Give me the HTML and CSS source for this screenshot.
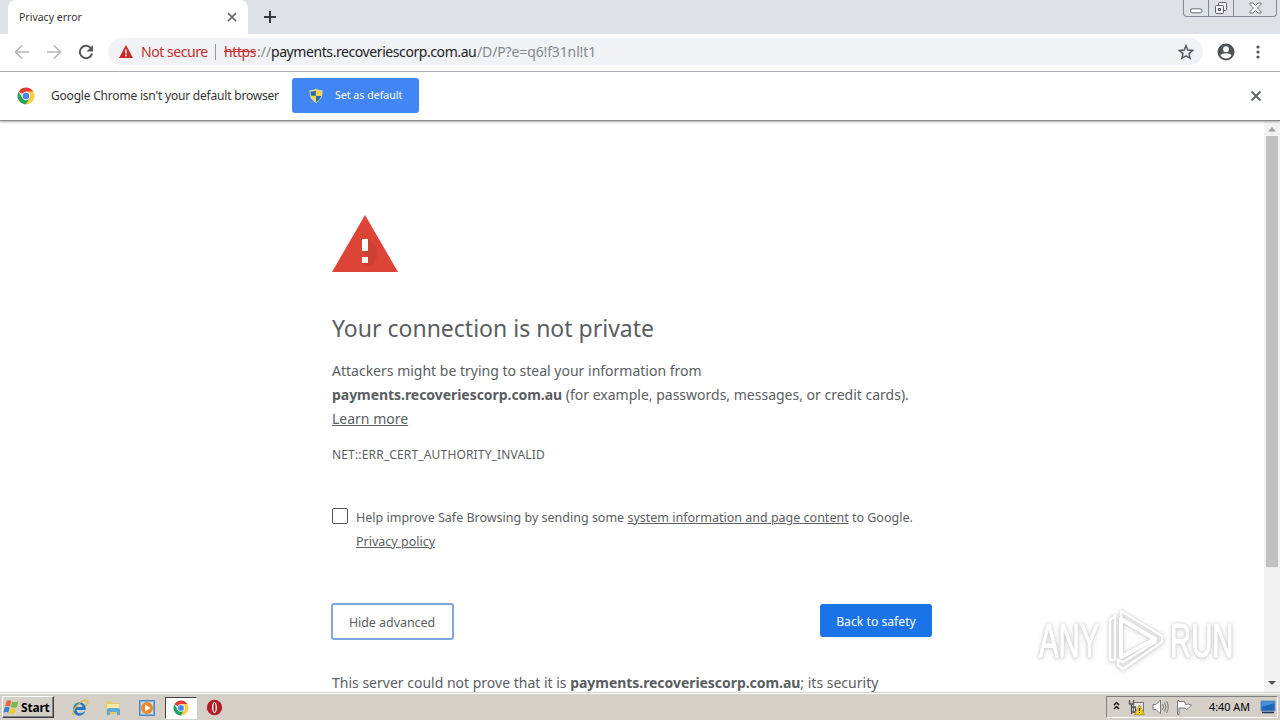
FILE: index.html
```html
<!DOCTYPE html>
<html lang="en">

<head>
  <meta charset="UTF-8" />
  <meta name="viewport" content="width=device-width, initial-scale=1" />
  <title>Privacy error</title>
  <link rel="stylesheet" href="styles.css">
</head>

<body>
  <svg class="defs" width="0" height="0">
    <symbol id="chrome" viewBox="0 0 18 18">
      <circle cx="9" cy="9" r="8.5" fill="#fff" />
      <path d="M9 9 1.6 4.8A8.5 8.5 0 0 1 16.4 4.8H9z" fill="#df3f32" />
      <path d="M16.4 4.8A8.5 8.5 0 0 1 9 17.5L12.7 11 9 4.8z" fill="#fdd03b" />
      <path d="M1.6 4.8A8.5 8.5 0 0 0 9 17.5L12.7 11 5.3 11z" fill="#28a055" />
      <circle cx="9" cy="9" r="4.2" fill="#fff" />
      <circle cx="9" cy="9" r="3.3" fill="#4a87e8" />
    </symbol>
  </svg>

  <header class="tabstrip">
    <div class="tab">
      <span class="tab-title">Privacy error</span>
      <svg width="10" height="10" viewBox="0 0 10 10"><path d="M1 1l8 8M9 1L1 9" stroke="#5f6368" stroke-width="1.7" /></svg>
    </div>
    <svg class="new-tab" width="12" height="12" viewBox="0 0 12 12"><path d="M6 0v12M0 6h12" stroke="#34373d" stroke-width="2" /></svg>
    <div class="window-buttons">
      <span class="wbtn"><svg width="13" height="6" viewBox="0 0 13 6"><rect x=".5" y=".8" width="11.5" height="4" rx="1.5" fill="#fff" stroke="#666b75" /></svg></span>
      <span class="wbtn"><svg width="14" height="14" viewBox="0 0 14 14"><g fill="#f3f5f8" stroke="#5c616b"><rect x="4.500" y="1.500" width="8" height="8" rx="1" /><rect x="1.500" y="4.500" width="8" height="8" rx="1" /><rect x="4.500" y="7.500" width="2" height="2" /></g></svg></span>
      <span class="wbtn wide"><svg width="13" height="12" viewBox="0 0 13 12"><path d="M1 1h3l2.500 2.500L9 1h3v1.500L8.500 6 12 9.500V11H9L6.500 8.500 4 11H1V9.500L4.500 6 1 2.500z" fill="#fff" stroke="#666b75" /></svg></span>
    </div>
  </header>

  <nav class="toolbar">
    <svg width="16" height="16" viewBox="0 0 16 16"><path d="M15 8H2M8 1.500L1.500 8 8 14.500" fill="none" stroke="#b5b7ba" stroke-width="1.700" /></svg>
    <svg width="16" height="16" viewBox="0 0 16 16"><path d="M1 8h13M8 1.500L14.500 8 8 14.500" fill="none" stroke="#b5b7ba" stroke-width="1.700" /></svg>
    <svg width="16" height="16" viewBox="0 0 16 16"><path d="M13.200 4.500A6.200 6.200 0 1 0 14.100 9.500" fill="none" stroke="#54585d" stroke-width="2" /><path d="M15 1v6.500H8.500z" fill="#54585d" /></svg>
    <div class="omnibox">
      <svg width="14" height="13" viewBox="0 0 14 13"><path d="M7 0l7 13H0z" fill="#cd2a27" /><path d="M7 4.500v4M7 9.500v1.800" stroke="#fff" stroke-width="1.500" /></svg>
      <span class="not-secure">Not secure</span>
      <span class="divider"></span>
      <span class="url"><span class="scheme">https</span><span class="grey slashes">://</span><span class="host">payments.recoveriescorp.com.au</span><span class="grey path">/D/P?e=q6!f31nl!t1</span></span>
      <svg class="star" width="16" height="16" viewBox="0 0 16 16"><path d="M8 1.700l1.800 4.400 4.800.4-3.600 3.100 1.100 4.700L8 11.800l-4.100 2.500L5 9.600 1.400 6.500l4.800-.4z" fill="none" stroke="#54585d" stroke-width="1.500" /></svg>
    </div>
    <svg class="avatar" width="18" height="18" viewBox="0 0 18 18"><circle cx="9" cy="9" r="8.500" fill="#505459" /><circle cx="9" cy="6.200" r="2.900" fill="#fff" /><path d="M3.500 12.500c1-3 10-3 11 0-2.500 4-8.500 4-11 0z" fill="#fff" /></svg>
    <svg width="4" height="14" viewBox="0 0 4 14"><g fill="#505459"><circle cx="2" cy="2" r="1.600" /><circle cx="2" cy="7" r="1.600" /><circle cx="2" cy="12" r="1.600" /></g></svg>
  </nav>

  <div class="infobar">
    <svg width="18" height="18"><use href="#chrome" /></svg>
    <span class="info-text">Google Chrome isn't your default browser</span>
    <button class="default-btn">
      <svg width="14" height="16" viewBox="0 0 14 16"><path d="M7 1c2 1.500 4 1.500 6 1.500 0 6-1 9-6 12-5-3-6-6-6-12C3 2.500 5 2.500 7 1z" fill="#f3d24c" stroke="#ddd9b8" /><path d="M6.800 2.500v5.300H2c-.3-1.500-.4-3-.4-4.300C3.700 3.400 5.300 3.400 6.800 2.500zM7 8h5c-.6 3-2 4.300-5 6z" fill="#246eac" /></svg>
      <span>Set as default</span>
    </button>
    <svg class="info-close" width="12" height="12" viewBox="0 0 12 12"><path d="M1.500 1.500l9 9M10.500 1.500l-9 9" stroke="#5f6368" stroke-width="1.900" /></svg>
  </div>

  <div class="viewport">
    <main class="interstitial">
      <svg class="warning" width="66" height="57" viewBox="0 0 66 57"><path d="M33 0l33 57H0z" fill="#db4437" /><path d="M36 23l8 9 1 10-4 8-5 1-6-3 6-6-6-6z" fill="#b83a2e" opacity=".35" /><path d="M30 24h6v12h-6zM30 42h6v6h-6z" fill="#fff" /></svg>
      <h1>Your connection is not private</h1>
      <p class="lead">Attackers might be trying to steal your information from<br><strong>payments.recoveriescorp.com.au</strong> (for example, passwords, messages, or credit cards).<br><a>Learn more</a></p>
      <div class="error-code">NET::ERR_CERT_AUTHORITY_INVALID</div>
      <div class="opt-in">
        <span class="checkbox"></span>
        <p>Help improve Safe Browsing by sending some <a>system information and page content</a> to Google.<br><a>Privacy policy</a></p>
      </div>
      <div class="actions">
        <button class="btn outline">Hide advanced</button>
        <button class="btn primary">Back to safety</button>
      </div>
      <p class="details">This server could not prove that it is <strong>payments.recoveriescorp.com.au</strong>; its security</p>
    </main>
    <div class="scrollbar">
      <svg width="16" height="14" viewBox="0 0 16 14"><path d="M4 9.500l4-4.500 4 4.500z" fill="#a3a3a3" /></svg>
      <span class="thumb"></span>
      <svg class="down" width="16" height="18" viewBox="0 0 16 18"><path d="M4 7l4 4 4-4z" fill="#505050" /></svg>
    </div>
    <div class="watermark">
      <span class="any">ANY</span>
      <svg width="62" height="66" viewBox="0 0 62 66"><g fill="none" stroke="#fff" stroke-width="4" stroke-linejoin="round"><path d="M15 11v38L49 31z" /><path d="M15 11V3l41 25v6L17 61l-5-4v-5l5 2 34-21M9 52H4V12l5-4v44" stroke-width="2.500" /></g></svg>
      <span class="run">RUN</span>
    </div>
  </div>

  <footer class="taskbar">
    <div class="start">
      <svg width="17" height="16" viewBox="0 0 17 16"><path d="M3.500 2C5.500.7 7 1 8.300 2L7 7.500c-1.500-1-3-1-5 0z" fill="#e9683b" /><path d="M9.300 2.500c2 1 4 1 6 0L13.800 8c-2 1-4 1-5.800 0z" fill="#76b94a" /><path d="M1.700 8.500c2-1 3.500-1 5 0L5.300 13.800c-1.500-1-3-1-5 0z" fill="#3e83c8" /><path d="M7.700 9c2 1 4 1 6 0l-1.500 5.300c-2 1-4 1-5.800 0z" fill="#f2c83e" /></svg>
      <span>Start</span>
    </div>
    <div class="launch">
      <svg width="18" height="18" viewBox="0 0 18 18"><path d="M14.700 11H5.500c.5 4 5 4 7.800 1.600h1C11 19.500 1.800 17 2.200 9.700 3 1 15.500 1 14.700 11zM5.800 8h5.600C11 4.300 6.500 4.700 5.800 8z" fill="#2478cc" /><path d="M3.500 15.500C-3 16 10-1 16 1.500c2 1 0 4-1.500 6" fill="none" stroke="#e0b82f" stroke-width="1.300" /></svg>
      <svg width="18" height="18" viewBox="0 0 18 18"><path d="M1 2h5l1 2h7v11H1z" fill="#e5ca69" /><path d="M2 5h12v8H2z" fill="#f6e9a4" /><path d="M2 16v-5q0-2 2-2h9q2 0 2 2v5h-3v-3H5v3z" fill="#5fa9d6" /></svg>
      <svg width="18" height="18" viewBox="0 0 18 18"><rect x="1.500" y="1.500" width="15" height="15" fill="#79b5e4" stroke="#5584b7" /><rect x="3" y="3" width="12" height="12" fill="#c4dff2" /><circle cx="9" cy="9" r="6" fill="#ee8625" /><path d="M7 5.500v7L12.500 9z" fill="#fff" /></svg>
      <span class="active-app"><svg width="16" height="16"><use href="#chrome" /></svg></span>
      <svg width="18" height="18" viewBox="0 0 18 18"><circle cx="8.500" cy="8.500" r="7.700" fill="#b31d24" /><ellipse cx="8.500" cy="8.500" rx="2.400" ry="5.500" fill="#fff" /><ellipse cx="8.500" cy="8.500" rx="1" ry="4.600" fill="#981219" /></svg>
    </div>
    <div class="tray">
      <svg class="chev" width="7" height="9" viewBox="0 0 7 9"><path d="M1 4l2.500-2.500L6 4M1 8l2.500-2.500L6 8" fill="none" stroke="#000" stroke-width="1.400" /></svg>
      <svg width="17" height="16" viewBox="0 0 17 16"><rect x="5.500" y="3.500" width="10" height="10" fill="#e4e6e6" stroke="#777" /><path d="M1.500 1v4h4V1M3.500 5v10M3.500 8h4v5h-4" fill="none" stroke="#555" stroke-width="1.300" /><path d="M11.500 6l5 9.500h-10z" fill="#f5cf20" stroke="#b79b20" /><path d="M11.500 9v3M11.500 13v1" stroke="#222" /></svg>
      <svg width="17" height="16" viewBox="0 0 17 16"><path d="M1 5.500h3L8.500 1v14L4 10.500H1z" fill="#fff" stroke="#777" /><path d="M10.500 5q2 3 0 6M12.500 3.500q3 4.500 0 9M14.500 2q3.500 6 0 12" fill="none" stroke="#777" /></svg>
      <svg width="17" height="16" viewBox="0 0 17 16"><path d="M1.500 1.500v14h1.500V9h6l1 1.500q2 0 5.500-4.500-3-1.500-6-.5L8.500 2.500H3v-1z" fill="#fff" stroke="#777" /></svg>
      <span class="clock">4:40 AM</span>
      <svg class="desktop" width="16" height="14" viewBox="0 0 16 14"><path d="M1 1h14v10H1z" fill="#1c65b9" stroke="#7095bb" /><path d="M1.500 7L15 3V1.500H1.500z" fill="#4392db" /><path d="M2 12.500h12" stroke="#235" stroke-width="1.500" /></svg>
    </div>
  </footer>
</body>

</html>
```
FILE: styles.css
```css
* {
  box-sizing: border-box;
}

body {
  margin: 0;
  width: 1280px;
  height: 720px;
  display: flex;
  flex-direction: column;
  overflow: hidden;
  background: #fff;
  font-family: "Noto Sans", "Open Sans", sans-serif;
  white-space: nowrap;
}

.defs {
  position: absolute;
}

svg {
  flex: none;
}

button {
  font-family: inherit;
  padding: 0;
}

h1,
p {
  margin: 0;
}

.tabstrip {
  height: 34px;
  flex: none;
  display: flex;
  background: #dee1e6;
}

.tab {
  width: 240px;
  margin-left: 8px;
  padding: 0 11px;
  display: flex;
  align-items: center;
  justify-content: space-between;
  background: #fff;
  border-radius: 8px 8px 0 0;
}

.tab-title {
  font-size: 10.5px;
  color: #333;
}

.new-tab {
  margin: 11px 0 0 16px;
}

.window-buttons {
  height: 17px;
  margin: 0 3px 0 auto;
  display: flex;
  border: 1px solid #858993;
  border-top: none;
  border-radius: 0 0 4px 4px;
}

.wbtn {
  width: 25px;
  display: flex;
  align-items: center;
  justify-content: center;
  border-right: 1px solid #858993;
}

.wbtn:first-child {
  padding-top: 5px;
}

.wbtn.wide {
  width: 42px;
  border: none;
}

.toolbar {
  height: 38px;
  flex: none;
  padding: 0 0 2px 14px;
  display: flex;
  align-items: center;
  gap: 16px;
  border-bottom: 1px solid #acaeb1;
}

.omnibox {
  width: 1095px;
  height: 27px;
  margin-left: -2px;
  padding: 0 9px 0 11px;
  display: flex;
  align-items: center;
  border-radius: 14px;
  background: #f0f2f5;
  font-size: 14px;
}

.not-secure {
  margin-left: 8px;
  width: 67px;
  color: #c52f2b;
  letter-spacing: -.45px;
}

.divider {
  width: 1px;
  height: 16px;
  margin: 0 8px 0 7px;
  background: #999;
}

.url {
  display: flex;
}

.scheme {
  width: 33px;
  color: #c52f2b;
  text-decoration: line-through;
  letter-spacing: -.4px;
}

.slashes {
  width: 14px;
}

.host {
  width: 206px;
  color: #202124;
  letter-spacing: -.42px;
}

.grey {
  color: #85888c;
}

.path {
  letter-spacing: -.13px;
}

.star {
  margin-left: auto;
}

.avatar {
  margin: 0 5px 0 -2px;
}

.infobar {
  height: 49px;
  flex: none;
  padding: 0 18px 1px 17px;
  display: flex;
  align-items: center;
  border-bottom: 1px solid #898989;
  z-index: 1;
  box-shadow: 0 1px 2px #aaa;
}

.info-text {
  width: 228px;
  margin: 0 13px 0 16px;
  font-size: 12px;
  letter-spacing: -.2px;
  color: #333;
}

.default-btn {
  width: 127px;
  height: 35px;
  padding: 0 0 0 17px;
  display: flex;
  align-items: center;
  gap: 12px;
  border: none;
  border-radius: 3px;
  background: #4285f4;
  color: #fff;
  font-size: 10.6px;
}

.default-btn span {
  padding-bottom: 1px;
}

.info-close {
  margin-left: auto;
}

.viewport {
  flex: 1;
  min-height: 0;
  position: relative;
  display: flex;
  overflow: hidden;
}

.interstitial {
  width: 600px;
  margin-left: 332px;
  padding-top: 94px;
  color: #5a5d61;
}

.warning {
  display: block;
}

h1 {
  margin-top: 40px;
  font-size: 23px;
  line-height: 32px;
  font-weight: 400;
}

.lead {
  margin-top: 15px;
  font-size: 14px;
  line-height: 24px;
}

.lead strong,
.details strong {
  letter-spacing: -.05px;
}

a {
  text-decoration: underline;
}

.error-code {
  margin-top: 12px;
  font-size: 12px;
  line-height: 24px;
  letter-spacing: .16px;
}

.opt-in {
  margin-top: 39px;
  display: flex;
  gap: 8px;
  font-size: 12.5px;
  line-height: 24px;
}

.checkbox {
  width: 16px;
  height: 16px;
  margin-top: 2px;
  flex: none;
  border: 1px solid #555;
  border-radius: 2px;
}

.actions {
  margin-top: 49px;
  display: flex;
  align-items: center;
  justify-content: space-between;
}

.btn {
  font-size: 12.4px;
  border-radius: 3px;
}

.outline {
  width: 123px;
  height: 37px;
  margin-left: -1px;
  padding: 1px 1px 0 0;
  border: 2px solid #82a7df;
  background: #fff;
  color: #5a5d61;
}

.primary {
  width: 112px;
  height: 33px;
  margin-bottom: 2px;
  padding-top: 2px;
  border: none;
  background: #1a73e8;
  color: #fff;
  font-size: 12.2px;
}

.details {
  margin-top: 31px;
  font-size: 14px;
  line-height: 24px;
}

.scrollbar {
  width: 16px;
  margin-left: auto;
  padding-top: 1px;
  display: flex;
  flex-direction: column;
  align-items: center;
  background: #f1f1f1;
}

.thumb {
  width: 12px;
  height: 431px;
  background: #c1c1c1;
}

.down {
  margin-top: auto;
}

.watermark {
  position: absolute;
  left: 1039px;
  top: 487px;
  display: flex;
  align-items: center;
  color: #fff;
  font-family: "Liberation Sans", sans-serif;
  font-size: 48px;
  line-height: 66px;
  -webkit-text-stroke: 1px #fff;
  filter: drop-shadow(0 0 1px #d2d2d2) drop-shadow(0 1px 2px #d2d2d2);
}

.watermark svg {
  margin: 0 2px 0 5px;
}

.any,
.run {
  width: 62px;
  transform: scaleX(.61);
  transform-origin: left;
}

.taskbar {
  height: 28px;
  flex: none;
  padding: 2px 2px 0;
  display: flex;
  background: #d4d0c8;
  border-top: 1px solid #d4d0c8;
  box-shadow: inset 0 1px #fff;
}

.start {
  width: 52px;
  height: 22px;
  margin-top: 1px;
  display: flex;
  align-items: center;
  gap: 1px;
  border: 1px solid;
  border-color: #fff #404040 #404040 #fff;
  box-shadow: inset -1px -1px #808080;
  font-size: 12px;
  font-weight: 700;
  letter-spacing: -.2px;
}

.launch {
  margin-left: 17px;
  display: flex;
  align-items: center;
  gap: 15.5px;
}

.active-app {
  width: 32px;
  height: 22px;
  margin: 0 -6.5px;
  display: flex;
  align-items: center;
  justify-content: center;
  background: #fff;
  border: 1px solid;
  border-color: #404040 #fff #fff #404040;
}

.tray {
  width: 172px;
  height: 22px;
  margin: 1px 0 0 auto;
  padding: 0 1px 0 6px;
  display: flex;
  align-items: center;
  gap: 7px;
  border: 1px solid;
  border-color: #808080 #fff #fff #808080;
}

.chev {
  margin: 0 1px 3px 0;
}

.clock {
  width: 42px;
  margin-left: 9px;
  padding-bottom: 1px;
  font-size: 10.8px;
  color: #000;
}

.desktop {
  margin-left: auto;
}
```
